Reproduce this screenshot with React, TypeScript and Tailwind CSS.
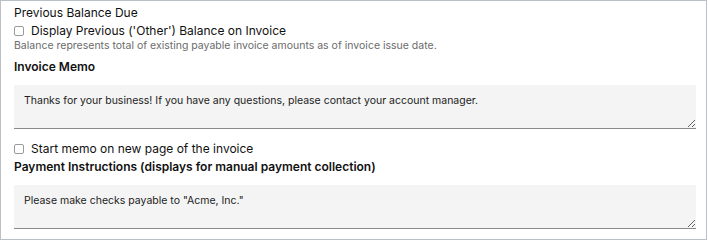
export default function App() {
  return (
    <div className="w-[708px] h-[241px] bg-white font-[family-name:Inter,sans-serif] text-[#111]">
      <div className="w-[707px] h-[240px] border border-[#b9c0c6] pl-[13px] pr-[10px] pt-[4px]">
        <div className="text-[12px] leading-[16px]">Previous Balance Due</div>
        <label className="flex items-center gap-[7px] mt-[2px] text-[12px] leading-[16px]">
          <span className="w-[10px] h-[10px] border border-[#9a9a9a] rounded-[2px] bg-white" />
          Display Previous ('Other') Balance on Invoice
        </label>
        <div className="text-[10.5px] leading-[13px] text-[#6b6b6b]">
          Balance represents total of existing payable invoice amounts as of invoice issue date.
        </div>

        <div className="mt-[7px] text-[12px] leading-[16px] font-semibold">Invoice Memo</div>
        <textarea
          className="mt-[10px] block w-full h-[44px] bg-[#f4f4f4] border-b border-[#8a8a8a] px-[10px] pt-[9px] text-[10.5px] leading-[14px] text-[#222] outline-none"
          defaultValue="Thanks for your business! If you have any questions, please contact your account manager."
        />

        <label className="flex items-center gap-[7px] mt-[12px] text-[12px] leading-[16px]">
          <span className="w-[10px] h-[10px] border border-[#9a9a9a] rounded-[2px] bg-white" />
          Start memo on new page of the invoice
        </label>
        <div className="mt-[2px] text-[12px] leading-[16px] font-semibold">
          Payment Instructions (displays for manual payment collection)
        </div>
        <textarea
          className="mt-[10px] block w-full h-[44px] bg-[#f4f4f4] border-b border-[#8a8a8a] px-[10px] pt-[9px] text-[10.5px] leading-[14px] text-[#222] outline-none"
          defaultValue={'Please make checks payable to "Acme, Inc."'}
        />
      </div>
    </div>
  );
}
